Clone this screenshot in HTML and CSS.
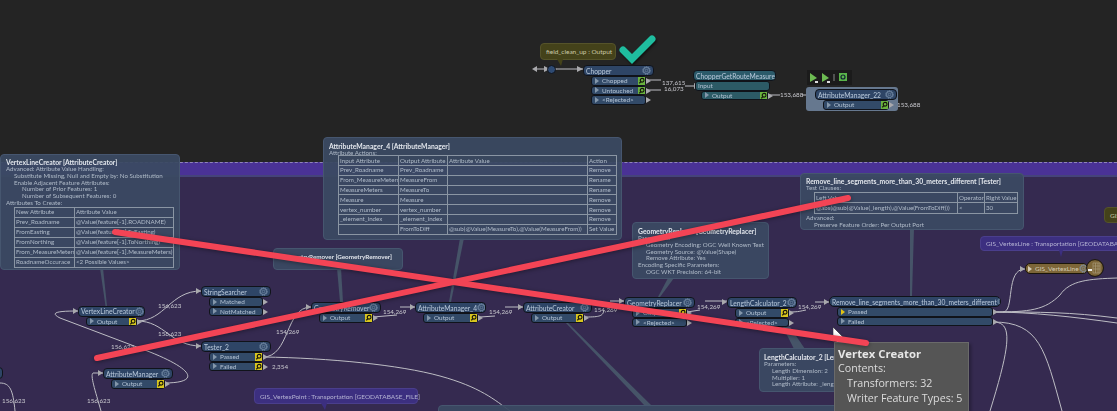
FILE: index.html
```html
<!DOCTYPE html>
<html lang="en">
<head>
<meta charset="utf-8">
<title>Vertex Creator workspace</title>
<link rel="stylesheet" href="styles.css">
</head>
<body>
<svg class="defs" width="0" height="0" aria-hidden="true">
  <symbol id="gear" viewBox="0 0 10 10">
    <circle cx="5" cy="5" r="3.400" fill="none" stroke="#7f96b0" stroke-width=".9"/>
    <circle cx="5" cy="5" r="4.200" fill="none" stroke="#7f96b0" stroke-width="1" stroke-dasharray="1.300 1"/>
    <circle cx="5" cy="5" r="1.400" fill="none" stroke="#7f96b0" stroke-width=".7"/>
  </symbol>
  <symbol id="mag" viewBox="0 0 8 8">
    <circle cx="4.400" cy="3.400" r="2" fill="none" stroke="#15150c" stroke-width="1.200"/>
    <path d="M3 5 1.400 6.800" stroke="#15150c" stroke-width="1.400"/>
  </symbol>
</svg>
<main class="canvas">
  <div class="scene">
    <div class="band"></div>
    <div class="under"></div>

    <svg class="wires" width="1117" height="411" viewBox="0 0 1117 411">
      <g class="tails">
        <path d="M100 268 L103 268 L107 306 L105.500 306Z"/>
        <path d="M337 268 L341 268 L343 302 L340 302Z"/>
        <path d="M460 238 L464 238 L451 302 L449 302Z"/>
        <path d="M668 278 L674 278 L660 297 L658 297Z"/>
        <path d="M910 228 L914 228 L912 296 L910 296Z"/>
        <path d="M564 321 L566 321 L652 406 L645 406Z"/>
        <path d="M783 327 L790 327 L805 349 L794 349Z"/>
      </g>
      <g class="wire">
        <path d="M536 69H583"/>
        <path d="M646 80H661M646 90H661M685 86H695"/>
        <path d="M770 95H780M802 95H815"/>
        <path d="M137 321C165 321 170 291 201 291"/>
        <path d="M137 321C165 321 170 346 201 346"/>
        <path d="M164 383C200 383 195 370 150 352L60 318C48 312 60 311 78 311"/>
        <path d="M0 383C10 383 13 390 15 411"/>
        <path d="M101 411C95 390 90 375 93 373H103"/>
        <path d="M263 357C290 357 285 307 311 307"/>
        <path d="M263 357C330 358 400 365 440 376S495 400 510 411"/>
        <path d="M373 317L397 315M400 307H415"/>
        <path d="M480 317L495 316M505 307H523"/>
        <path d="M586 317C600 317 603 316 604 310M610 301H624"/>
        <path d="M687 312L700 310M705 301H727"/>
        <path d="M788 312C800 312 800 311 806 310M815 302H829"/>
        <path d="M993 312C1040 312 1070 312 1117 318"/>
        <path d="M993 312C1030 312 1075 317 1117 323"/>
        <path d="M993 312C1030 312 1045 310 1060 295C1070 280 1090 279 1117 278"/>
        <path d="M1003 312C1015 312 1005 269 1025 269"/>
        <path d="M993 322C1040 322 1045 350 1062 411"/>
        <path d="M993 322C1012 322 1012 340 990 411"/>
      </g>
      <g class="heads">
        <path d="M532 69l5-3v6zM550 69l-6-3v6z"/>
        <path d="M557 69l-5-3v6zM583 69l-6-3v6z"/>
        <path d="M700 86l-6-3v6z"/>
        <path d="M816 95l-5-3v6z"/>
        <path d="M201 291l-5-3v6zM201 346l-5-3v6zM78 311l-5-3v6zM103 373l-5-3v6zM311 307l-5-3v6zM415 307l-5-3v6zM523 307l-5-3v6zM624 301l-5-3v6zM727 302l-5-3v6zM829 302l-5-3v6zM1025 269l-5-3v6z"/>
      </g>
    </svg>

    <div class="label l1">137,615</div>
    <div class="label l2">16,073</div>
    <div class="label l3">153,688</div>
    <div class="label l4">153,688</div>
    <div class="label l5">156,623</div>
    <div class="label l6">156,623</div>
    <div class="label l7">156,623</div>
    <div class="label l8">156,623</div>
    <div class="label l9">156,623</div>
    <div class="label l10">154,269</div>
    <div class="label l11">2,354</div>
    <div class="label l12">154,269</div>
    <div class="label l13">154,269</div>
    <div class="label l14">154,269</div>
    <div class="label l15">154,269</div>
    <div class="label l16">154,269</div>

    <div class="bubble olive b-clean">field_clean_up : Output</div>
    <div class="merge"></div>
    <svg class="check" width="44" height="36" viewBox="0 0 44 36"><path d="M7 16 16 25 36 5"/></svg>

    <div class="bar">
      <svg width="44" height="14" viewBox="0 0 44 14">
        <path d="M3 3l7 5-7 4z" fill="#6dbb52"/><path d="M8 11h3v2H8z" fill="#ddd"/>
        <path d="M15 3l7 5-7 4z" fill="#6dbb52"/><path d="M20 11h3v2h-3z" fill="#ddd"/>
        <path d="M27 4v7" stroke="#888"/>
        <rect x="32" y="3" width="8" height="8" fill="#5ab44a"/><circle cx="36" cy="7" r="2" fill="none" stroke="#123" stroke-width="1.200"/>
      </svg>
    </div>
    <div class="halo"></div>

    <div class="xf n-chopper">
      <div class="head"><span>Chopper</span><svg class="gear"><use href="#gear"/></svg></div>
      <div class="port"><i></i><span>Chopped</span><svg class="mag green"><use href="#mag"/></svg></div>
      <div class="port"><i></i><span>Untouched</span><svg class="mag green"><use href="#mag"/></svg></div>
      <div class="port"><i></i><span>&lt;Rejected&gt;</span></div>
    </div>
    <div class="xf teal n-cgrm">
      <div class="head"><span>ChopperGetRouteMeasure</span><svg class="gear"><use href="#gear"/></svg></div>
      <div class="port in"><span>Input</span></div>
      <div class="port"><i></i><span>Output</span><svg class="mag green"><use href="#mag"/></svg></div>
    </div>
    <div class="xf n-am22">
      <div class="head"><span>AttributeManager_22</span><svg class="gear"><use href="#gear"/></svg></div>
      <div class="port"><i></i><span>Output</span><svg class="mag green"><use href="#mag"/></svg></div>
    </div>
    <div class="xf n-vlc">
      <div class="head"><span>VertexLineCreator</span><svg class="gear"><use href="#gear"/></svg></div>
      <div class="port"><i></i><span>Output</span><svg class="mag"><use href="#mag"/></svg></div>
    </div>
    <div class="xf n-ss">
      <div class="head"><span>StringSearcher</span><svg class="gear"><use href="#gear"/></svg></div>
      <div class="port"><i></i><span>Matched</span></div>
      <div class="port"><i></i><span>NotMatched</span></div>
    </div>
    <div class="xf n-t2">
      <div class="head"><span>Tester_2</span><svg class="gear"><use href="#gear"/></svg></div>
      <div class="port"><i></i><span>Passed</span><svg class="mag"><use href="#mag"/></svg></div>
      <div class="port"><i></i><span>Failed</span><svg class="mag"><use href="#mag"/></svg></div>
    </div>
    <div class="xf n-gr">
      <div class="head"><span>GeometryRemover</span><svg class="gear"><use href="#gear"/></svg></div>
      <div class="port"><i></i><span>Output</span><svg class="mag"><use href="#mag"/></svg></div>
    </div>
    <div class="xf n-am">
      <div class="head"><span>AttributeManager</span><svg class="gear"><use href="#gear"/></svg></div>
      <div class="port"><i></i><span>Output</span><svg class="mag"><use href="#mag"/></svg></div>
    </div>
    <div class="xf n-am4">
      <div class="head"><span>AttributeManager_4</span><svg class="gear"><use href="#gear"/></svg></div>
      <div class="port"><i></i><span>Output</span><svg class="mag"><use href="#mag"/></svg></div>
    </div>
    <div class="xf n-ac">
      <div class="head"><span>AttributeCreator</span><svg class="gear"><use href="#gear"/></svg></div>
      <div class="port"><i></i><span>Output</span><svg class="mag"><use href="#mag"/></svg></div>
    </div>
    <div class="xf n-grp">
      <div class="head"><span>GeometryReplacer</span><svg class="gear"><use href="#gear"/></svg></div>
      <div class="port"><i></i><span>Output</span><svg class="mag"><use href="#mag"/></svg></div>
      <div class="port"><i></i><span>&lt;Rejected&gt;</span></div>
    </div>
    <div class="xf n-lc">
      <div class="head"><span>LengthCalculator_2</span><svg class="gear"><use href="#gear"/></svg></div>
      <div class="port"><i></i><span>Output</span><svg class="mag"><use href="#mag"/></svg></div>
      <div class="port"><i></i><span>&lt;Rejected&gt;</span></div>
    </div>
    <div class="xf n-rm">
      <div class="head"><span>Remove_line_segments_more_than_30_meters_different</span><svg class="gear"><use href="#gear"/></svg></div>
      <div class="port"><i class="on"></i><span>Passed</span></div>
      <div class="port"><i></i><span>Failed</span></div>
    </div>
    <div class="xf n-edge"><div class="head"></div></div>

    <div class="writer">
      <span class="w-name"><i></i>GIS_VertexLine</span><svg class="gear"><use href="#gear"/></svg>
      <svg class="calc" width="18" height="18" viewBox="0 0 18 18">
        <circle cx="9" cy="9" r="8.400" fill="#7d6638" stroke="#15120a"/>
        <path d="M7 4h7v10H7zM7 7h7M7 10h7M9.500 4v10M12 4v10" fill="none" stroke="#a89a78" stroke-width=".7"/>
        <path d="M2 10h4v2H2z" fill="#eee"/>
      </svg>
    </div>

    <div class="bubble indigo b-line">GIS_VertexLine : Transportation [GEODATABASE_FILE]</div>
    <div class="bubble indigo b-point">GIS_VertexPoint : Transportation [GEODATABASE_FILE]</div>
    <div class="bubble olive b-gis">GIS</div>

    <section class="tip t-vlc">
      <h3>VertexLineCreator [AttributeCreator]</h3>
      <p>Advanced: Attribute Value Handling:</p>
      <p class="i1">Substitute Missing, Null and Empty by: No Substitution</p>
      <p class="i1">Enable Adjacent Feature Attributes:</p>
      <p class="i2">Number of Prior Features: 1</p>
      <p class="i2">Number of Subsequent Features: 0</p>
      <p>Attributes To Create:</p>
      <table class="vlc-table">
        <tr><td>New Attribute</td><td>Attribute Value</td></tr>
        <tr><td>Prev_Roadname</td><td>@Value(feature[-1].ROADNAME)</td></tr>
        <tr><td>FromEasting</td><td>@Value(feature[-1].ToEasting)</td></tr>
        <tr><td>FromNorthing</td><td>@Value(feature[-1].ToNorthing)</td></tr>
        <tr><td>From_MeasureMeters</td><td>@Value(feature[-1].MeasureMeters)</td></tr>
        <tr><td>RoadnameOccurace</td><td>&lt;2 Possible Values&gt;</td></tr>
      </table>
    </section>

    <section class="tip t-gr">
      <h3>GeometryRemover [GeometryRemover]</h3>
    </section>

    <section class="tip t-am4">
      <h3>AttributeManager_4 [AttributeManager]</h3>
      <p>Attribute Actions:</p>
      <table class="am4-table">
        <tr><td>Input Attribute</td><td>Output Attribute</td><td>Attribute Value</td><td>Action</td></tr>
        <tr><td>Prev_Roadname</td><td>Prev_Roadname</td><td></td><td>Remove</td></tr>
        <tr><td>From_MeasureMeters</td><td>MeasureFrom</td><td></td><td>Rename</td></tr>
        <tr><td>MeasureMeters</td><td>MeasureTo</td><td></td><td>Rename</td></tr>
        <tr><td>Measure</td><td>Measure</td><td></td><td>Remove</td></tr>
        <tr><td>vertex_number</td><td>vertex_number</td><td></td><td>Remove</td></tr>
        <tr><td>_element_index</td><td>_element_index</td><td></td><td>Remove</td></tr>
        <tr><td></td><td>FromToDiff</td><td>@sub(@Value(MeasureTo),@Value(MeasureFrom))</td><td>Set Value</td></tr>
      </table>
    </section>

    <section class="tip t-test">
      <h3>Remove_line_segments_more_than_30_meters_different [Tester]</h3>
      <p>Test Clauses:</p>
      <table class="test-table">
        <tr><td>Left Value</td><td>Operator</td><td>Right Value</td></tr>
        <tr><td>@abs(@sub(@Value(_length),@Value(FromToDiff)))</td><td>&lt;</td><td>30</td></tr>
      </table>
      <p>Advanced:</p>
      <p class="i1">Preserve Feature Order: Per Output Port</p>
    </section>

    <section class="tip t-grp">
      <h3>GeometryReplacer [GeometryReplacer]</h3>
      <p>Parameters:</p>
      <p class="i1">Geometry Encoding: OGC Well Known Text</p>
      <p class="i1">Geometry Source: @Value(Shape)</p>
      <p class="i1">Remove Attribute: Yes</p>
      <p>Encoding Specific Parameters:</p>
      <p class="i1">OGC WKT Precision: 64-bit</p>
    </section>

    <section class="tip t-lc">
      <h3>LengthCalculator_2 [LengthCalculator]</h3>
      <p>Parameters:</p>
      <p class="i1">Length Dimension: 2</p>
      <p class="i1">Multiplier: 1</p>
      <p class="i1">Length Attribute: _length</p>
    </section>

    <div class="tip t-bottom"></div>

    <svg class="cursor" width="12" height="18" viewBox="0 0 12 18"><path d="M0 0 11 11H5L8 17 5 18 2.500 12 0 15Z"/></svg>
  </div>

  <aside class="hover">
    <strong>Vertex Creator</strong>
    <span>Contents:</span>
    <span class="ind">Transformers: 32</span>
    <span class="ind">Writer Feature Types: 5</span>
  </aside>

  <svg class="marks" width="1117" height="411" viewBox="0 0 1117 411">
    <path d="M115 232 866 343"/>
    <path d="M97 358 848 198"/>
  </svg>
</main>
</body>
</html>
```

FILE: styles.css
```css
* { box-sizing: border-box; }
html, body { margin: 0; padding: 0; background: #242424; }
.defs { position: absolute; }
.canvas {
  position: relative;
  width: 1117px;
  height: 411px;
  overflow: hidden;
  background: #242424;
  font-family: Lato, "Liberation Sans", sans-serif;
}
.scene { position: absolute; inset: 0; filter: blur(.35px); }
.band {
  position: absolute; left: 0; right: 0; top: 162px; height: 15px;
  background: #4a3296;
  border-top: 1px dashed #8f86b8;
  border-bottom: 2px solid #45437a;
}
.under {
  position: absolute; left: 0; right: 0; top: 177px; bottom: 0;
  background: #352a50;
}
.wires { position: absolute; left: 0; top: 0; }
.wire path { fill: none; stroke: #bdbdc4; stroke-width: 1; }
.heads path { fill: #a9a9ad; }
.tails path { fill: #465468; }

.label {
  position: absolute;
  font-size: 6.300px; line-height: 9px;
  color: #c9c9cf;
  white-space: nowrap;
}
.l1 { left: 662px; top: 78px; }
.l2 { left: 664px; top: 84px; }
.l3 { left: 780px; top: 90px; }
.l4 { left: 897px; top: 100px; }
.l5 { left: 158px; top: 301px; }
.l6 { left: 158px; top: 329px; }
.l7 { left: 111px; top: 342px; }
.l8 { left: 2px; top: 396px; }
.l9 { left: 87px; top: 396px; }
.l10 { left: 276px; top: 327px; }
.l11 { left: 272px; top: 362px; }
.l12 { left: 383px; top: 307px; }
.l13 { left: 489px; top: 307px; }
.l14 { left: 594px; top: 305px; }
.l15 { left: 697px; top: 302px; }
.l16 { left: 798px; top: 302px; }

/* transformers */
.xf { position: absolute; display: flex; flex-direction: column; }
.head {
  height: 11px;
  display: flex; align-items: center; justify-content: space-between;
  padding: 0 2px;
  background: #2e4566;
  border: 1px solid #10131a;
  border-radius: 4px;
  color: #b9c9db;
  font-size: 6.700px;
  white-space: nowrap;
  overflow: hidden;
}
.port {
  position: relative;
  height: 9.500px;
  margin: 0 8px;
  display: flex; align-items: center;
  background: #324a68;
  border: 1px solid #10131a;
  border-radius: 3px;
  color: #b4c3d4;
  font-size: 6.400px;
  padding-left: 2px;
  white-space: nowrap;
}
.port::after {
  content: "";
  position: absolute; right: -6px; top: 1px;
  border-left: 5px solid #a9a9ad;
  border-top: 3px solid transparent;
  border-bottom: 3px solid transparent;
}
.port i {
  width: 0; height: 0; margin: 0 3px 0 1px;
  border-left: 4px solid #8497ab;
  border-top: 3px solid transparent;
  border-bottom: 3px solid transparent;
}
.port i.on { border-left-color: #e3c414; }
.port.in::after { display: none; }
.gear { width: 9px; height: 9px; flex: none; }
.mag {
  position: absolute; right: 0; top: 0;
  width: 7.500px; height: 7.500px;
  background: #d8c61e;
}
.mag.green { background: #6ab43e; }
.teal .head { background: #2b5a6a; }
.teal .port { background: #2c5a66; }
.teal .port.in { margin-left: 2px; margin-right: 6px; padding-left: 2px; }

.n-chopper { left: 583px; top: 65px; width: 71px; }
.n-cgrm { left: 693px; top: 70px; width: 83px; }
.n-am22 { left: 815px; top: 89px; width: 82px; }
.n-vlc { left: 78px; top: 305.500px; width: 67px; }
.n-ss { left: 201px; top: 286px; width: 70px; }
.n-t2 { left: 201px; top: 341px; width: 70px; }
.n-gr { left: 311px; top: 302px; width: 70px; }
.n-am { left: 103px; top: 368px; width: 70px; }
.n-am4 { left: 415px; top: 302px; width: 71px; }
.n-ac { left: 523px; top: 302px; width: 69px; }
.n-grp { left: 624px; top: 297px; width: 71px; }
.n-lc { left: 727px; top: 297px; width: 70px; }
.n-rm { left: 829px; top: 296px; width: 172px; }
.n-rm .head { border-radius: 5px; }
.n-edge { left: -8px; top: 367px; width: 11px; }
.n-edge .head { height: 12px; }

.halo {
  position: absolute; left: 806px; top: 87px; width: 92px; height: 24px;
  background: #66788f; border-radius: 3px;
}
.bar {
  position: absolute; left: 807px; top: 70px; width: 45px; height: 15px;
  background: #1b1b1b; line-height: 0;
}
.merge {
  position: absolute; left: 546.500px; top: 64.500px; width: 9px; height: 9px;
  border-radius: 50%; background: #2e4a72; border: 1px solid #10131a;
}
.check { position: absolute; left: 616px; top: 34px; filter: drop-shadow(1px 2px 1px rgba(0,0,0,.5)); }
.check path { fill: none; stroke: #1fbd9f; stroke-width: 7; stroke-linecap: round; stroke-linejoin: miter; }

.writer {
  position: absolute; left: 1025px; top: 263px; width: 63px; height: 11px;
  display: flex; align-items: center; justify-content: space-between;
  padding: 0 2px;
  background: #7d6638; border: 1px solid #1a150a; border-radius: 5px;
  color: #d5ccb6; font-size: 6.500px; white-space: nowrap;
}
.w-name { display: flex; align-items: center; }
.w-name i {
  width: 0; height: 0; margin-right: 3px;
  border-left: 4px solid #d5ccb6;
  border-top: 3px solid transparent;
  border-bottom: 3px solid transparent;
}
.calc { position: absolute; left: 60px; top: -5px; }

/* annotations */
.bubble {
  position: absolute;
  padding: 0 5px;
  display: flex; align-items: center;
  font-size: 6.500px;
  white-space: nowrap;
  border-radius: 4px;
}
.bubble::after {
  content: "";
  position: absolute;
  top: 100%;
  border-top: 7px solid;
  border-left: 4px solid transparent;
  border-right: 2px solid transparent;
}
.olive { background: #44421a; color: #c9c9a8; border: 1px solid #55532a; }
.olive::after { border-top-color: #44421a; }
.indigo { background: #3c2f80; color: #b5b3d3; border: 1px solid #4a3e8c; }
.indigo::after { border-top-color: #3c2f80; }
.b-clean { left: 540px; top: 43px; width: 76px; height: 17px; }
.b-clean::after { left: 16px; }
.b-line { left: 980px; top: 236px; width: 160px; height: 15px; }
.b-line::after { left: 78px; border-left-width: 2px; }
.b-point { left: 254px; top: 388px; width: 164px; height: 16px; }
.b-point::after { left: 66px; }
.b-gis { left: 1104px; top: 207px; width: 40px; height: 16px; }
.b-gis::after { display: none; }

/* tooltips */
.tip {
  position: absolute;
  background: rgba(58, 73, 98, .94);
  border: 1px solid #46566f;
  border-radius: 4px;
  color: #b0bbc9;
  font-size: 6.200px;
  line-height: 6.800px;
  padding: 5px;
  white-space: nowrap;
  overflow: hidden;
}
.tip h3 {
  margin: 0;
  font-size: 6.800px;
  line-height: 7px;
  font-weight: 700;
  color: #e2e6ec;
}
.tip p { margin: 0; }
.tip .i1 { padding-left: 8px; }
.tip .i2 { padding-left: 16px; }
.tip table {
  border-collapse: collapse;
  table-layout: fixed;
  color: #b0bbc9;
  font-size: 6.200px;
}
.tip td {
  border: 1px solid #8a95a3;
  padding: 0 1px;
  height: 10px;
  line-height: 8px;
  overflow: hidden;
}
.t-vlc { left: 0; top: 154px; width: 180px; height: 116px; padding-top: 4px; }
.vlc-table { margin: 0 0 0 8px; width: 160px; }
.vlc-table td:first-child { width: 60px; }
.t-gr { left: 273px; top: 248px; width: 130px; height: 22px; padding: 4px 5px 5px 7px; }
.t-gr h3 { font-size: 6.300px; }
.t-am4 { left: 323px; top: 137px; width: 299px; height: 103px; padding: 5px 5px; }
.am4-table { margin: -1.500px 0 0 9px; width: 279px; }
.am4-table td { height: 9.800px; }
.am4-table td:nth-child(1) { width: 60px; }
.am4-table td:nth-child(2) { width: 49px; }
.am4-table td:nth-child(4) { width: 29px; }
.t-test { left: 800px; top: 173px; width: 224px; height: 57px; padding: 4px 5px; }
.test-table { margin: 0 0 1px 8px; width: 204px; }
.test-table td { height: 10.500px; }
.test-table td:nth-child(2) { width: 27px; }
.test-table td:nth-child(3) { width: 33px; }
.t-grp { left: 632px; top: 222px; width: 137px; height: 57px; padding: 5px; }
.t-lc { left: 759px; top: 348px; width: 90px; height: 44px; padding: 5px 4px; }
.t-bottom { left: 438px; top: 405px; width: 400px; height: 30px; }
.cursor { position: absolute; left: 833px; top: 327px; }
.cursor path { fill: #fff; stroke: #111; stroke-width: .5; }

/* hover tooltip */
.hover {
  position: absolute; left: 834px; top: 342px; width: 135px; height: 76px;
  display: flex; flex-direction: column;
  padding: 3px 3px;
  background: #555555;
  border: 1px solid #6a6a6a;
  color: #dcdcdc;
  font-family: "Open Sans", "Liberation Sans", sans-serif;
  font-size: 10.700px;
  line-height: 15px;
  box-shadow: 2px 2px 3px rgba(0,0,0,.3);
}
.hover strong { font-size: 11.300px; color: #e6e6e6; }
.hover .ind { padding-left: 9px; }

/* red crossing strokes */
.marks { position: absolute; left: 0; top: 0; filter: drop-shadow(0 1px 2px rgba(0,0,0,.4)); }
.marks path { fill: none; stroke: #f34455; stroke-width: 6; stroke-linecap: round; }
```
